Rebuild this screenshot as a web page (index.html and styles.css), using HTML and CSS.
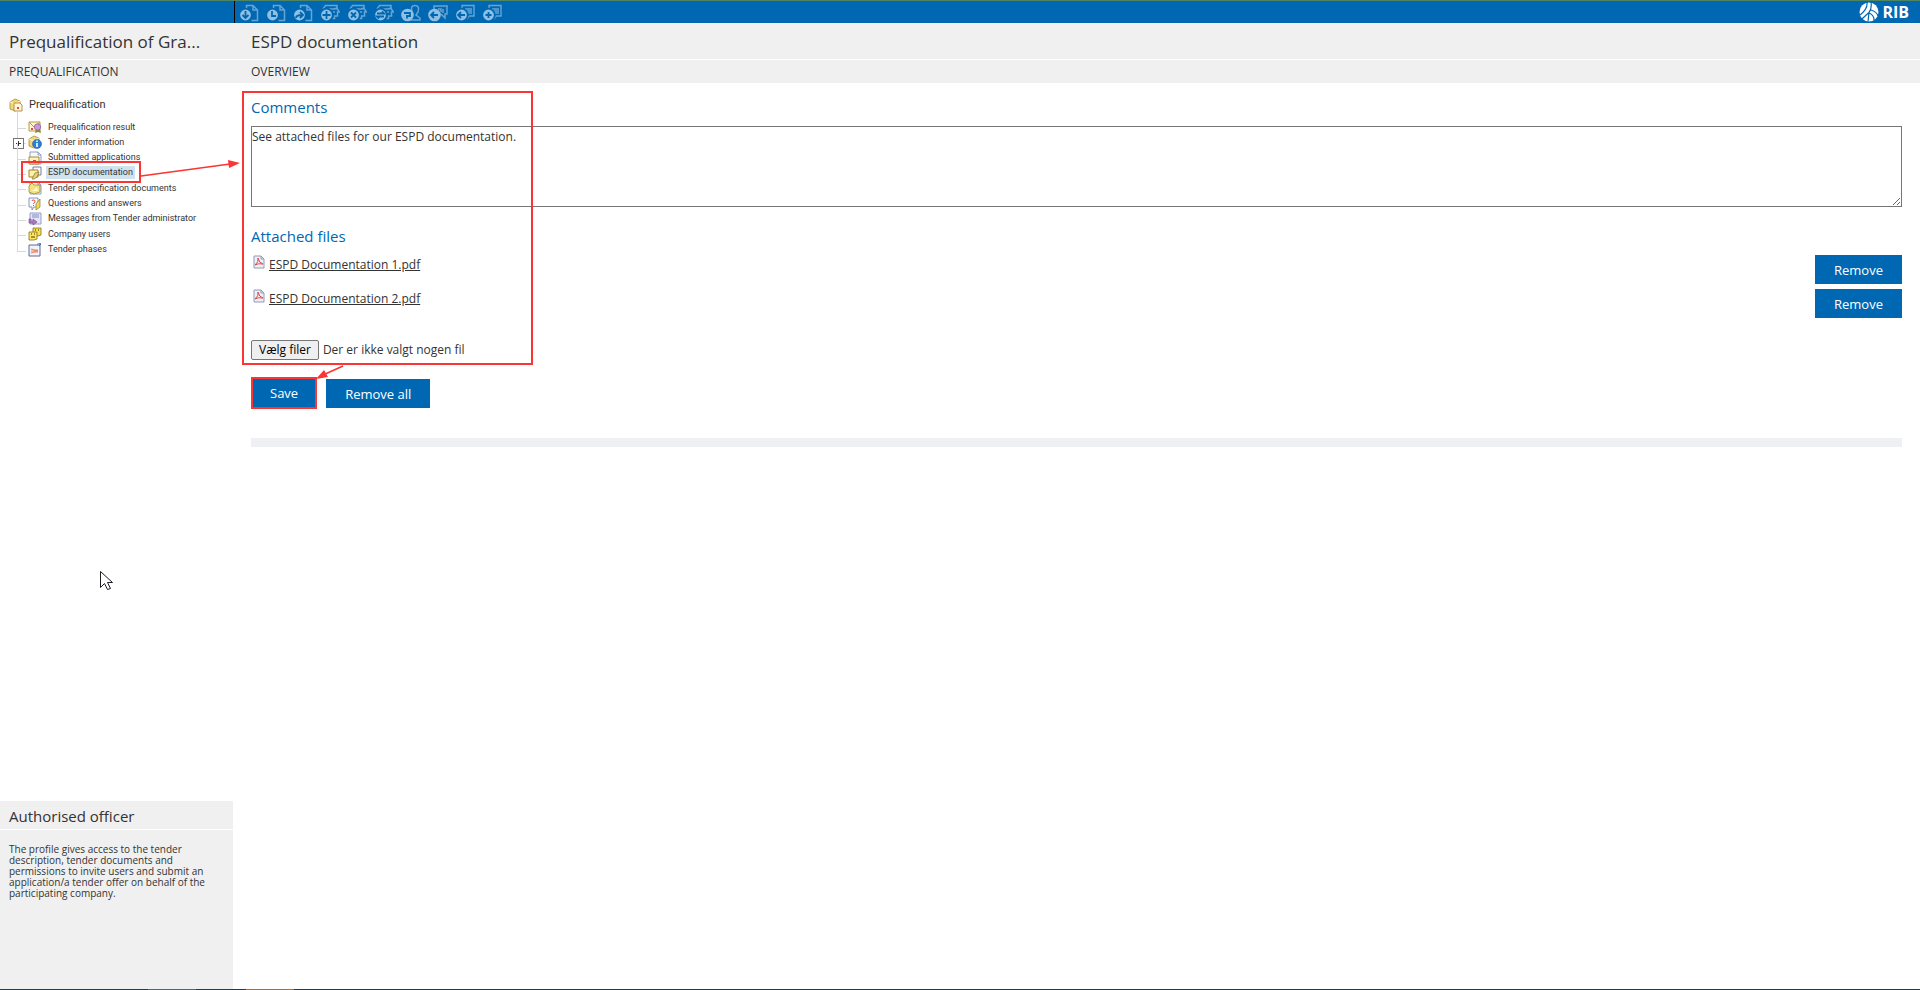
FILE: index.html
```
<!DOCTYPE html>
<html lang="en">
<head>
	<meta charset="UTF-8">
	<title>ESPD documentation</title>
	<link rel="stylesheet" href="styles.css">
</head>
<body>
	<!-- shared icon shapes -->
	<svg class="defs" aria-hidden="true">
		<defs>
			<symbol id="doc" viewBox="0 0 20 18">
				<path d="M7.500 5V1.500h6.500l4.500 4.500v10.500h-6M14 2v4h4" fill="none" stroke="#66a4d2" stroke-width="1.5"/>
				<circle cx="6.500" cy="11" r="6.300" fill="#8fbfe2"/>
			</symbol>
			<symbol id="head" viewBox="0 0 20 18">
				<path d="M3 5l2.500-3.500H17v3l2.500 3.500h-2v4h-3v2.500h-2M9 5h5l3-1M13 8h2" fill="none" stroke="#66a4d2" stroke-width="1.5"/>
				<circle cx="6.500" cy="11" r="6.300" fill="#8fbfe2"/>
			</symbol>
			<symbol id="note" viewBox="0 0 20 18">
				<path d="M7 5V1.500h12v10.500h-5l-2 3M10 5h7M11 7h6M12 9h5" fill="none" stroke="#66a4d2" stroke-width="1.4"/>
				<circle cx="6.500" cy="11" r="6.300" fill="#8fbfe2"/>
			</symbol>
			<symbol id="box" viewBox="0 0 14 14">
				<path d="M1 4l5-3 5 2v7l-5 3-5-2z" fill="#f0d878" stroke="#a98b35" stroke-width=".8"/>
				<path d="M1 4l5 2 5-3M6 6v7" fill="none" stroke="#fff6c8"/>
			</symbol>
			<symbol id="sheet" viewBox="0 0 14 14">
				<path d="M2 1h8l3 3v9H2z" fill="#f7f9fd" stroke="#8794b8" stroke-width=".9"/>
				<path d="M10 1v3h3" fill="none" stroke="#8794b8" stroke-width=".9"/>
			</symbol>
		</defs>
	</svg>

	<header class="topbar">
		<nav class="tools">
			<button type="button" aria-label="Download"><svg viewBox="0 0 20 18"><use href="#doc"/><path d="M6.500 7v7M3.500 11l3 3 3-3"/></svg></button>
			<button type="button" aria-label="History"><svg viewBox="0 0 20 18"><use href="#doc"/><path d="M6 7v5h4"/></svg></button>
			<button type="button" aria-label="Forward"><svg viewBox="0 0 20 18"><use href="#doc"/><path d="M3 14q0-3 6-3M7 8l3 3-3 3"/></svg></button>
			<button type="button" aria-label="Add user"><svg viewBox="0 0 20 18"><use href="#head"/><path d="M6.500 7v8M2.500 11h8"/></svg></button>
			<button type="button" aria-label="Remove user"><svg viewBox="0 0 20 18"><use href="#head"/><path d="M4 8.500l5 5M9 8.500l-5 5"/></svg></button>
			<button type="button" aria-label="Change user"><svg viewBox="0 0 20 18"><use href="#head"/><path d="M3 9.500h7L8 7.500M10 12.500H3l2 2"/></svg></button>
			<button type="button" aria-label="Roles"><svg viewBox="0 0 20 18"><path d="M11 8q-2-6.500 3-6.500t3 6.500l-2 3 4 3v2H10" class="outline"/><circle cx="6.500" cy="11" r="6.300" fill="#8fbfe2"/><path d="M3 9h6v3H6v2.500"/></svg></button>
			<button type="button" aria-label="Question"><svg viewBox="0 0 20 18"><path d="M6 5V2h13v8h-2v4l-4-4M10 5h3v3M15 5v4" class="outline"/><circle cx="6.500" cy="11" r="6.300" fill="#8fbfe2"/><path d="M3 11h7M6 8l-3 3 3 3"/></svg></button>
			<button type="button" aria-label="Previous message"><svg viewBox="0 0 20 18"><use href="#note"/><path d="M3 11h7M6 8l-3 3 3 3"/></svg></button>
			<button type="button" aria-label="New message"><svg viewBox="0 0 20 18"><use href="#note"/><path d="M6.500 8v6M3.500 11h6"/></svg></button>
		</nav>
		<div class="logo">
			<svg viewBox="0 0 20 20" aria-hidden="true">
				<circle cx="10" cy="10" r="9.500" fill="#fff"/>
				<path d="M8 0q1 7-7 13M12 0q1 7-2 10.500Q6 14 3 17M10 10.500l-1 9M12 8q6 2 7 6M10 11q5 2 5 7" fill="none" stroke="#0068b3" stroke-width="1.200"/>
			</svg>
			<span>RIB</span>
		</div>
	</header>

	<div class="page">
		<aside class="sidebar">
			<h1 class="title">Prequalification of Gra...</h1>
			<h2 class="subtitle">PREQUALIFICATION</h2>

			<nav class="tree">
				<a href="#" class="root">
					<svg viewBox="0 0 14 14"><use href="#box"/><path d="M5 5h6l2 2v6H5z" fill="#fff6d8" stroke="#a98b35" stroke-width=".9"/><path d="M8 9h2v2H8z" fill="#f04040"/></svg>
					Prequalification
				</a>
				<ul>
					<li><a href="#"><svg viewBox="0 0 14 14"><path d="M1 2h11v9H1z" fill="#fff7d0" stroke="#b79a40"/><path d="M1 2l5 5 6-5" fill="none" stroke="#b79a40"/><path d="M8 9l-1 4 3-1 3 1-1-4z" fill="#8a8a30"/><circle cx="9.500" cy="7" r="3.200" fill="#c898d8" stroke="#8f65a5" stroke-width=".8"/><path d="M3 8h2v2H3z" fill="#e04848"/></svg><span>Prequalification result</span></a></li>
					<li class="closed"><a href="#"><svg viewBox="0 0 14 14"><use href="#box"/><circle cx="9" cy="9" r="4.500" fill="#2f7fd0" stroke="#1c5da5" stroke-width=".6"/><path d="M9 8v4M9 5.500v1.500" stroke="#fff" stroke-width="1.600"/></svg><span>Tender information</span></a></li>
					<li><a href="#"><svg viewBox="0 0 14 14"><use href="#sheet"/><path d="M1 6h10v7H1z" fill="#fff3bd" stroke="#a98b35"/><path d="M5 9h3v3H5z" fill="#e83a3a"/></svg><span>Submitted applications</span></a></li>
					<li class="current"><a href="#"><svg viewBox="0 0 14 14"><path d="M5 1h8v8H5z" fill="#fafaff" stroke="#777da3"/><path d="M1 4h9v7H1z" fill="#fff2a8" stroke="#9d8434"/><path d="M4 13l3-6 4-1-2 5-3 2z" fill="#e5d180" stroke="#85742c" stroke-width=".7"/></svg><span>ESPD documentation</span></a></li>
					<li><a href="#"><svg viewBox="0 0 14 14"><use href="#sheet"/><path d="M1 5l3-3 2 2h6v7l-6 2-5-2z" fill="#f4e27e" stroke="#a58d26" stroke-width=".8"/><path d="M4 10l5-4 1 4z" fill="#fff9cc"/></svg><span>Tender specification documents</span></a></li>
					<li><a href="#"><svg viewBox="0 0 14 14"><path d="M1 1h9v9H6l-2 3v-3H1z" fill="#f8faff" stroke="#727da5" stroke-width=".8"/><path d="M4 4q0-1 1.500-1T7 4.500 5.500 6.500V7M5.500 8v1" fill="none" stroke="#e03d3d"/><path d="M12 2v8l-4 3V7z" fill="#f0da5d" stroke="#8d7c25" stroke-width=".7"/></svg><span>Questions and answers</span></a></li>
					<li><a href="#"><svg viewBox="0 0 14 14"><path d="M2 1h11v11H2z" fill="#e2e5fb" stroke="#9a9cc8"/><path d="M4 3h7M4 5h7" stroke="#8588bd"/><path d="M1 7v4h4v2l4-3-4-3v2H3V7z" fill="#b37bc0" stroke="#6f4489" stroke-width=".6"/></svg><span>Messages from Tender administrator</span></a></li>
					<li><a href="#"><svg viewBox="0 0 14 14"><path d="M5 1h8v7l-3 1H5z" fill="#f7df53" stroke="#83711e" stroke-width=".8"/><path d="M1 5h8v7l-3 1H1z" fill="#ffe65c" stroke="#83711e" stroke-width=".8"/><path d="M3 7h1M6 7h1M3 10h4M7 3h1M10 3h1" stroke="#443900"/></svg><span>Company users</span></a></li>
					<li><a href="#"><svg viewBox="0 0 14 14"><path d="M1 2h11v11H1z" fill="#eef3ff" stroke="#606b98"/><path d="M3 6l4 1h3M3 8h7M3 10l4-1h3" fill="none" stroke="#f08a60" stroke-width="1.200"/><path d="M9 1h4M11 0l2 1-2 2" fill="none" stroke="#3d5da0" stroke-width=".8"/></svg><span>Tender phases</span></a></li>
				</ul>
			</nav>

			<section class="officer">
				<h2>Authorised officer</h2>
				<p>The profile gives access to the tender description, tender documents and permissions to invite users and submit an application/a tender offer on behalf of the participating company.</p>
			</section>
		</aside>

		<main class="content">
			<h1 class="title">ESPD documentation</h1>
			<h2 class="subtitle">OVERVIEW</h2>

			<form class="espd" onsubmit="return false">
				<label class="heading" for="comments">Comments</label>
				<textarea id="comments">See attached files for our ESPD documentation.</textarea>

				<h3 class="heading">Attached files</h3>
				<ul class="files">
					<li>
						<svg viewBox="0 0 12 14"><path d="M1 1h7l3 3v9H1z" fill="#edf0f8" stroke="#8f9bb5"/><path d="M8 1v3h3" fill="none" stroke="#8f9bb5"/><path d="M2 10q4-3 3-7 1 5 5 6-5-1-8 1" fill="none" stroke="#d84b4b"/></svg>
						<a href="#">ESPD Documentation 1.pdf</a>
						<button type="button" class="btn">Remove</button>
					</li>
					<li>
						<svg viewBox="0 0 12 14"><path d="M1 1h7l3 3v9H1z" fill="#edf0f8" stroke="#8f9bb5"/><path d="M8 1v3h3" fill="none" stroke="#8f9bb5"/><path d="M2 10q4-3 3-7 1 5 5 6-5-1-8 1" fill="none" stroke="#d84b4b"/></svg>
						<a href="#">ESPD Documentation 2.pdf</a>
						<button type="button" class="btn">Remove</button>
					</li>
				</ul>

				<div class="picker">
					<input type="file" id="upload" multiple hidden>
					<button type="button" onclick="document.getElementById('upload').click()">Vælg filer</button>
					<label for="upload">Der er ikke valgt nogen fil</label>
				</div>

				<div class="actions">
					<button type="submit" class="btn marked">Save</button>
					<button type="button" class="btn">Remove all</button>
				</div>
				<hr>
			</form>
		</main>
	</div>

	<footer class="strip"></footer>

	<!-- guide marks and mouse pointer over the page -->
	<svg class="marks" width="560" height="620" viewBox="0 0 560 620" aria-hidden="true">
		<g fill="none" stroke="#fb3434" stroke-width="2">
			<rect x="22" y="162" width="118" height="20"/>
			<rect x="243" y="92" width="289" height="272"/>
			<path d="M141 176l89-12" stroke-width="1.500"/>
			<path d="M343 366l-20 9" stroke-width="1.500"/>
		</g>
		<path d="M240 163l-12-3 1 8zM316 379l8-9 4 7z" fill="#fb3434"/>
		<path d="M100.500 571.500v16l4-4 3 6 3-1-3-6h5z" fill="#fff" stroke="#1b1b2a"/>
	</svg>
</body>
</html>
```
FILE: styles.css
```
* {
	box-sizing: border-box;
}

body {
	position: relative;
	display: flex;
	flex-direction: column;
	min-height: 100vh;
	margin: 0;
	font: 12px/16px "Open Sans", "Noto Sans", sans-serif;
	color: #333;
	background: #fff;
}

h1, h2, h3, p, ul {
	margin: 0;
	padding: 0;
	font-weight: normal;
}

ul {
	list-style: none;
}

a {
	color: #333;
}

button, textarea {
	font: inherit;
}

.defs {
	position: absolute;
	width: 0;
	height: 0;
}

/* top bar */
.topbar {
	display: flex;
	justify-content: space-between;
	height: 23px;
	border-top: 1px solid #4f8561;
	background: #0068b3;
}

.tools {
	display: flex;
	align-items: center;
	gap: 7px;
	margin-left: 234px;
	padding: 2px 0 0 4px;
	border-left: 1px solid #000;
}

.tools button {
	width: 20px;
	height: 18px;
	padding: 0;
	border: 0;
	background: none;
}

.tools svg {
	display: block;
	width: 20px;
	height: 18px;
	fill: none;
	stroke: #0068b3;
	stroke-width: 1.8;
}

.tools circle {
	stroke: none;
}

.tools .outline {
	stroke: #66a4d2;
	stroke-width: 1.5;
}

.logo {
	display: flex;
	align-items: center;
	gap: 3px;
	padding-right: 11px;
	font-size: 16px;
	font-weight: bold;
	color: #fff;
}

.logo svg {
	width: 20px;
	height: 20px;
}

/* columns */
.page {
	display: grid;
	grid-template-columns: 233px 1fr;
	flex: 1;
}

.sidebar {
	display: flex;
	flex-direction: column;
}

.title {
	height: 37px;
	padding-left: 9px;
	border-bottom: 1px solid #fff;
	font-size: 17px;
	line-height: 38px;
	background: #f0f0f0;
}

.subtitle {
	height: 23px;
	padding-left: 9px;
	font-size: 12px;
	line-height: 23px;
	background: #f0f0f0;
}

.content .title,
.content .subtitle {
	padding-left: 18px;
}

/* tree */
.tree {
	flex: 1;
	padding: 14px 9px 0;
	font-family: Roboto, "Open Sans", sans-serif;
}

.tree a {
	display: flex;
	align-items: center;
	text-decoration: none;
}

.tree svg {
	width: 14px;
	height: 14px;
}

.tree .root {
	gap: 6px;
	font-size: 11px;
}

.tree ul {
	display: grid;
	grid-auto-rows: 1fr;
	height: 145px;
	margin-left: 8px;
	padding-top: 7px;
}

.tree li {
	position: relative;
	padding-left: 11px;
	font-size: 9px;
	line-height: 15px;
}

.tree li a {
	gap: 4px;
}

.tree li span {
	padding: 0 2px;
	line-height: 13px;
}

.tree li::before {
	content: "";
	position: absolute;
	left: 0;
	top: -8px;
	width: 8px;
	height: 16px;
	border: solid #d5dad8;
	border-width: 0 0 1px 1px;
}

.tree .closed::after {
	content: "";
	position: absolute;
	left: -4px;
	top: 3px;
	width: 9px;
	height: 9px;
	border: 1px solid #777;
	background:
		linear-gradient(#333, #333) center / 5px 1px no-repeat,
		linear-gradient(#333, #333) center / 1px 5px no-repeat,
		#fff;
}

.tree .current span {
	background: #cfe2ee;
}

/* role box */
.officer {
	height: 188px;
	background: #f0f0f0;
}

.officer h2 {
	height: 29px;
	padding-left: 9px;
	border-bottom: 1px solid #fff;
	font-size: 15px;
	line-height: 30px;
}

.officer p {
	padding: 14px 18px 0 9px;
	font-size: 10px;
	line-height: 11px;
}

/* form */
.espd {
	padding: 14px 18px 0;
}

.heading {
	display: block;
	height: 29px;
	font-size: 15px;
	line-height: 20px;
	color: #0068b3;
}

textarea {
	display: block;
	width: 100%;
	height: 81px;
	margin-bottom: 19px;
	padding: 2px 0;
	border: 1px solid #767676;
	color: #333;
	resize: both;
}

.files {
	display: grid;
	gap: 5px;
}

.files li {
	display: flex;
	align-items: flex-start;
	height: 29px;
}

.files svg {
	width: 12px;
	height: 14px;
	margin: 0 4px 0 2px;
}

.files a {
	line-height: 20px;
}

.files .btn {
	margin-left: auto;
}

.btn {
	height: 29px;
	padding: 1px 19px 0;
	border: 0;
	font-size: 13px;
	color: #fff;
	background: #0068b3;
}

.picker {
	display: flex;
	align-items: center;
	gap: 4px;
	margin-top: 22px;
}

.picker button {
	height: 20px;
	padding: 0 7px;
	border: 1px solid #767676;
	border-radius: 2px;
	line-height: 16px;
	color: #000;
	background: #efefef;
}

.actions {
	display: flex;
	align-items: center;
	gap: 9px;
	margin-top: 17px;
}

.marked {
	height: 32px;
	padding: 0 17px;
	border: 2px solid #fb3434;
}

hr {
	height: 9px;
	margin: 29px 0 0;
	border: 0;
	background: #eff0f3;
}

.strip {
	height: 1px;
	background: linear-gradient(to right, #263b48 148px, #59646a 148px 196px, #263b48 196px 246px, #a5703f 246px 294px, #263b48 294px);
}

.marks {
	position: absolute;
	left: 0;
	top: 0;
	pointer-events: none;
}
```
